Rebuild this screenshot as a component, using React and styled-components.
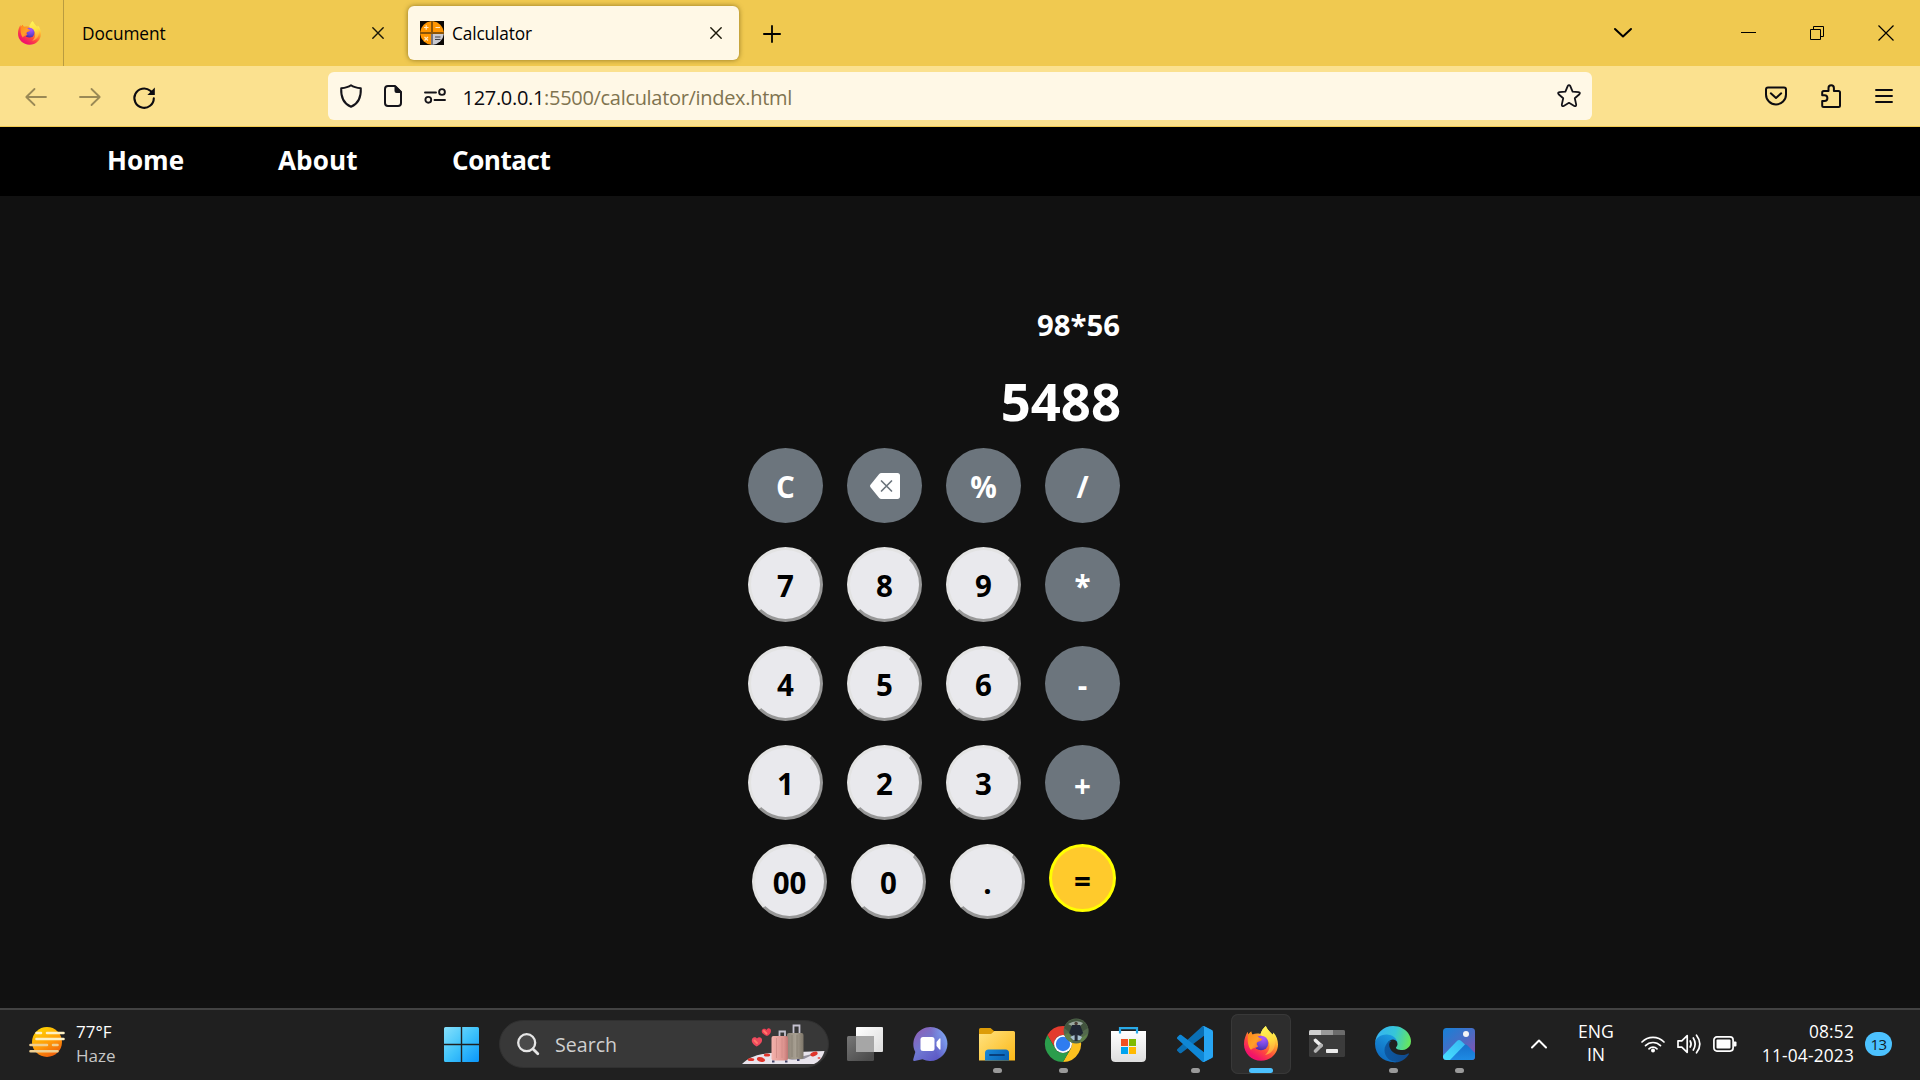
import React from "react";
import styled, { createGlobalStyle } from "styled-components";

const Global = createGlobalStyle`
  * { box-sizing: border-box; }
  body { margin: 0; background: #111; overflow: hidden; }
  body, button { font-family: "Open Sans", "Noto Sans", sans-serif; }
`;

const Screen = styled.div`
  width: 1920px;
  height: 1080px;
  display: flex;
  flex-direction: column;
  background: #111111;
`;

const Svg = styled.svg`
  display: block;
  flex: none;
  overflow: visible;
  margin-left: ${(p) => p.$ml || 0}px;
  margin-top: ${(p) => p.$mt || 0}px;
`;

const Icon = ({ w, h, vb, ml, mt, children, ...rest }) => (
  <Svg width={w} height={h} viewBox={vb || `0 0 ${w} ${h}`} $ml={ml} $mt={mt} fill="none" {...rest}>
    {children}
  </Svg>
);

/* ---------- browser ---------- */

const TabBar = styled.header`
  height: 66px;
  flex: none;
  display: flex;
  align-items: center;
  background: #f0c950;
  color: #15141a;
`;

const ViewButton = styled.div`
  width: 64px;
  height: 66px;
  border-right: 1px solid #b99b40;
  padding: 21px 0 0 18px;
`;

const Tab = styled.div`
  width: ${(p) => (p.$active ? 331 : 336)}px;
  height: 54px;
  margin-left: ${(p) => (p.$active ? 8 : 0)}px;
  padding: 0 ${(p) => (p.$active ? 17.5 : 16.5)}px 1px ${(p) => (p.$active ? 12 : 18)}px;
  display: flex;
  align-items: center;
  gap: 8px;
  border-radius: 6px;
  background: ${(p) => (p.$active ? "#fff8e6" : "transparent")};
  box-shadow: ${(p) => (p.$active ? "0 0 5px rgba(90, 70, 10, 0.65)" : "none")};
`;

const TabTitle = styled.span`
  flex: 1;
  font-size: 17.3px;
  line-height: 26px;
  letter-spacing: ${(p) => p.$ls || 0}px;
  padding-top: 3px;
  color: #000;
`;

const WindowControls = styled.div`
  margin-left: auto;
  display: flex;
  align-items: center;
  padding-right: 26px;
`;

const Toolbar = styled.div`
  height: 61px;
  flex: none;
  display: flex;
  align-items: center;
  background: #fbe18f;
  border-bottom: 1px solid #f0c950;
  padding-left: 25px;
`;

const UrlBar = styled.div`
  width: 1264px;
  height: 48px;
  margin-left: 173px;
  border-radius: 6px;
  background: #fff8e6;
  display: flex;
  align-items: center;
  padding-left: 12px;
`;

const UrlText = styled.span`
  margin-left: 16.5px;
  padding-top: 3px;
  width: 1071px;
  font-size: 20px;
  line-height: 30px;
  letter-spacing: -0.31px;
  color: #7f7450;
  b { font-weight: 400; color: #0c0b10; }
`;

/* ---------- page ---------- */

const Nav = styled.nav`
  height: 69px;
  flex: none;
  display: flex;
  background: #000;
  padding-left: 107px;
`;

const NavLink = styled.a`
  width: ${(p) => p.$w}px;
  padding-top: 14px;
  font-size: 26.1px;
  line-height: 38px;
  font-weight: 700;
  letter-spacing: ${(p) => p.$ls || 0}px;
  color: #fff;
`;

const Page = styled.main`
  flex: 1;
  padding: 109px 0 0 748px;
`;

const Calculator = styled.section`
  width: 372px;
  color: #fff;
  font-weight: 700;
`;

const Expression = styled.div`
  height: 40px;
  text-align: right;
  font-size: 29.3px;
  line-height: 40px;
`;

const Result = styled.div`
  height: 66px;
  margin: 23px -1px 14px 0;
  text-align: right;
  font-size: 52.6px;
  line-height: 66px;
`;

const KeyRow = styled.div`
  display: flex;
  align-items: flex-start;
  gap: 24px;
  height: 75px;
  margin-bottom: 24px;
  padding-left: ${(p) => (p.$indent ? 4 : 0)}px;
`;

const Key = styled.button`
  flex: none;
  width: 75px;
  height: 75px;
  padding: ${(p) => p.$drop || 2}px 0 0;
  display: flex;
  align-items: center;
  justify-content: center;
  border-radius: 50%;
  border: 3px solid;
  border-color: #e3e3e3 #979797 #979797 #e3e3e3;
  background: #e9e9ed;
  color: #000;
  font-size: 29.5px;
  line-height: 40px;
  font-weight: 700;
`;

const OperatorKey = styled(Key)`
  border: 0;
  background: #6c757d;
  color: #fff;
`;

const EqualsKey = styled(Key)`
  width: 67px;
  height: 68px;
  border-color: #ffff00;
  background: #ffca2c;
`;

/* ---------- taskbar ---------- */

const Taskbar = styled.footer`
  height: 72px;
  flex: none;
  display: flex;
  background: #202020;
  border-top: 2px solid #424242;
  color: #fff;
`;

const Weather = styled.div`
  width: 444px;
  display: flex;
  padding: 9px 0 0 29px;
`;

const Stack = styled.div`
  display: flex;
  flex-direction: column;
  align-items: ${(p) => p.$align || "flex-start"};
  padding-top: 1px;
  font-size: ${(p) => p.$size || 17}px;
  line-height: ${(p) => p.$lh || 24}px;
  letter-spacing: ${(p) => p.$ls || 0}px;
  margin-left: ${(p) => p.$ml || 0}px;
  width: ${(p) => (p.$w ? `${p.$w}px` : "auto")};
`;

const Muted = styled.span`
  color: #c6c6c6;
`;

const Search = styled.div`
  width: 330px;
  height: 48px;
  margin: 10px 3px 0 20px;
  display: flex;
  align-items: center;
  border: 1px solid #303030;
  border-radius: 24px;
  background: #383838;
  padding-left: 17px;
`;

const SearchLabel = styled.span`
  width: 187px;
  margin-left: 16px;
  padding-top: 1px;
  font-size: 19.6px;
  line-height: 28px;
  color: #cfcfcf;
`;

const AppSlot = styled.div`
  width: 66px;
  height: 60px;
  margin-top: 4px;
  display: flex;
  flex-direction: column;
  align-items: center;
`;

const AppTile = styled.div`
  width: 60px;
  height: 60px;
  display: flex;
  flex-direction: column;
  align-items: center;
  justify-content: space-between;
  padding: 12px 0 1px;
  border-radius: 7px;
  background: ${(p) => (p.$active ? "#2d2d2d" : "transparent")};
  box-shadow: ${(p) => (p.$active ? "inset 0 0 0 1px #383838" : "none")};
`;

const Indicator = styled.i`
  height: 5px;
  width: ${(p) => (p.$active ? 24 : p.$open ? 9 : 0)}px;
  border-radius: 2.5px;
  background: ${(p) => (p.$active ? "#4cc2ff" : "#9a9a9a")};
`;

const Tray = styled.div`
  margin-left: auto;
  display: flex;
  padding: 9px 28px 0 0;
`;

const Badge = styled.span`
  width: 27px;
  height: 24px;
  margin: 13px 0 0 11px;
  border-radius: 12px;
  background: #4cc2ff;
  color: #10202a;
  font-size: 15px;
  letter-spacing: -0.6px;
  line-height: 24px;
  text-align: center;
`;

const Firefox = ({ w, h, id }) => (
  <Icon w={w} h={h} vb="0 0 34 35">
    <defs>
      <linearGradient id={`${id}b`} x1="28" y1="4" x2="8" y2="33" gradientUnits="userSpaceOnUse">
        <stop offset="0.05" stopColor="#fff44f" />
        <stop offset="0.35" stopColor="#ff9a2c" />
        <stop offset="0.62" stopColor="#ff4a3d" />
        <stop offset="0.9" stopColor="#f2146a" />
      </linearGradient>
      <radialGradient id={`${id}g`} cx="19" cy="12" r="13" gradientUnits="userSpaceOnUse">
        <stop offset="0.1" stopColor="#a755f8" />
        <stop offset="0.6" stopColor="#6b46d8" />
        <stop offset="1" stopColor="#4a2aa0" />
      </radialGradient>
      <linearGradient id={`${id}h`} x1="2" y1="8" x2="18" y2="20" gradientUnits="userSpaceOnUse">
        <stop stopColor="#ff8a16" />
        <stop offset="0.6" stopColor="#ffa02a" />
        <stop offset="1" stopColor="#ff5a36" />
      </linearGradient>
      <linearGradient id={`${id}y`} x1="22" y1="0" x2="30" y2="28" gradientUnits="userSpaceOnUse">
        <stop stopColor="#fff35a" />
        <stop offset="0.5" stopColor="#ffdc3e" />
        <stop offset="1" stopColor="#ff9640" />
      </linearGradient>
    </defs>
    <path
      fill={`url(#${id}b)`}
      d="M21.8 0C23 3.4 26 5.600 28.400 8.600C28.900 7.900 29.200 7.200 29.300 6.400C32.400 9.600 34 14 34 18.500C34 27.600 26.500 34.800 17 34.800C7.600 34.800 0 27.600 0 18.300C0 13 1.600 9.500 3.600 5.800L4.300 8.500C5 7.300 6 6.200 7.200 5.400C7.300 6.500 7.700 7.600 8.300 8.400C11 7.400 14 7.200 16.500 8C17.500 4.700 19.300 2 21.800 0Z"
    />
    <path
      fill={`url(#${id}y)`}
      d="M21.8 0C23 3.400 26 5.600 28.400 8.600C30.800 12 31.800 16 30.600 20.500C29.300 25.500 25 28.600 21 29C25.500 25.500 26.500 20 24.600 15.600C23 12.400 18 12 16.500 8C17.500 4.700 19.300 2 21.800 0Z"
    />
    <circle cx="17" cy="17" r="7.300" fill={`url(#${id}g)`} />
    <path
      fill={`url(#${id}h)`}
      d="M4.300 8.500C5.500 7 6.400 6.200 7.200 5.400C7.300 7 8 8.200 9 9.100C11 8.700 12.800 9.200 13.900 10.400C15 11.800 16.800 12.400 18.200 12.900C17.800 15 15.200 15.200 13.600 16C12 17.400 12.700 19.200 14.200 20.200C12 22.300 8.500 21.500 7 24C4 20.500 3 14 4.300 8.500Z"
    />
  </Icon>
);

const CalcFavicon = () => (
  <Icon w={24} h={24}>
    <rect width="24" height="24" fill="#0b0805" />
    <path d="M11 0.200A12 12 0 0 0 0.200 11H11Z" fill="#ff9500" />
    <path d="M13 0.200A12 12 0 0 1 23.800 11H13Z" fill="#ff9500" />
    <path d="M11 23.800A12 12 0 0 1 0.200 13H11Z" fill="#ff9500" />
    <path d="M13 23.800A12 12 0 0 0 23.800 13H13Z" fill="#c9c9cf" />
    <path d="M12 0V12M0 12H24" stroke="#8b5507" strokeWidth="2" />
    <path d="M12 13V24" stroke="#77747a" strokeWidth="2" />
    <path d="M4 6.500H8.500M6.200 4.300V8.700M15.500 6.500H20M4.500 16L8 19.500M8 16L4.500 19.500" stroke="#ffe7c2" strokeWidth="1.200" />
    <path d="M15 16H20.500M15 18.500H20.500" stroke="#45454a" strokeWidth="1.200" />
  </Icon>
);

const CloseTab = () => (
  <Icon w={12} h={12} stroke="#1a1708" strokeWidth="1.400" strokeLinecap="round">
    <path d="M0.800 0.800L11.200 11.200M11.200 0.800L0.800 11.200" />
  </Icon>
);

const Backspace = () => (
  <Icon w={30} h={26} mt={-2}>
    <path d="M11.500 0H27.500C29 0 30 1 30 2.500V23.500C30 25 29 26 27.500 26H11.500C10.500 26 9.800 25.600 9.200 24.900L0.500 14.200C-0.100 13.500 -0.100 12.500 0.500 11.800L9.200 1.100C9.800 0.400 10.500 0 11.500 0Z" fill="#fff" />
    <path d="M11.500 8L21.500 18M21.500 8L11.500 18" stroke="#6c757d" strokeWidth="1.700" strokeLinecap="round" />
  </Icon>
);

const SunHaze = () => (
  <Icon w={36} h={31} mt={8}>
    <defs>
      <linearGradient id="sun" x1="10" y1="1" x2="25" y2="30" gradientUnits="userSpaceOnUse">
        <stop stopColor="#ffd400" />
        <stop offset="0.55" stopColor="#ff9a0a" />
        <stop offset="1" stopColor="#ee5a0c" />
      </linearGradient>
    </defs>
    <circle cx="18" cy="15" r="15" fill="url(#sun)" />
    <g strokeWidth="2.600" strokeLinecap="round">
      <path d="M7.500 6H12M18 6H34.500M7.500 12H34.500" stroke="#fdf0c4" />
      <path d="M1.500 18H18M24 18H28.500M1.500 24.200H28.500" stroke="#efcf92" />
    </g>
  </Icon>
);

const Luggage = () => (
  <Icon w={84} h={41} mt={1}>
    <defs>
      <linearGradient id="pink" x1="30" y1="0" x2="47" y2="0" gradientUnits="userSpaceOnUse">
        <stop stopColor="#f3b0aa" />
        <stop offset="0.7" stopColor="#dd948f" />
        <stop offset="1" stopColor="#b96f6d" />
      </linearGradient>
      <linearGradient id="grey" x1="45" y1="0" x2="62" y2="0" gradientUnits="userSpaceOnUse">
        <stop stopColor="#8f8679" />
        <stop offset="0.5" stopColor="#a79f92" />
        <stop offset="1" stopColor="#7c7467" />
      </linearGradient>
    </defs>
    <path d="M0 40C6 34 15 30 29 29L82.500 27C81 33 77 38 72 40Z" fill="#e9e4ec" />
    <path d="M46 36L74 29L62 35Z" fill="#94909c" />
    <g fill="#e0342b">
      <ellipse cx="9" cy="35.500" rx="3.300" ry="1.600" />
      <ellipse cx="19" cy="35.500" rx="4.200" ry="2.300" transform="rotate(15 19 35.500)" />
      <ellipse cx="25" cy="31" rx="3.200" ry="1.600" />
      <ellipse cx="72" cy="30" rx="3.800" ry="2" transform="rotate(-20 72 30)" />
      <ellipse cx="77" cy="34" rx="1.500" ry="0.800" />
    </g>
    <path d="M51.500 10V1.500H57.500V10M37.500 12V7.500H43V12" stroke="#c4c1cf" strokeWidth="1.800" />
    <rect x="45" y="9" width="16.500" height="26" rx="2" fill="url(#grey)" />
    <path d="M50 11V33M55 11V33" stroke="#877e71" strokeWidth="0.800" />
    <rect x="29.500" y="12" width="16.500" height="24.500" rx="2" fill="url(#pink)" />
    <path d="M34.500 14V34M40 14V34" stroke="#d48d89" strokeWidth="0.900" />
    <path d="M30 36.500H32.500V38.500H30ZM43 36.500H45.500V38.500H43ZM55 35H57.500V37H55Z" fill="#45466a" />
    <path d="M14.500 22.500C10.500 20 9 17.500 10 15C11.300 12.500 14 13 15 14.500C16.500 12.500 19.500 13 20 15.500C20.500 18.500 17.500 21 14.500 22.500Z" fill="#ef4a5e" />
    <path d="M25 12C21 10.500 19 8.200 20 6C21.300 4 23.600 4.600 24.400 6C25.700 3.500 28.400 3.900 28.900 6.200C29.300 9 27.500 10.800 25 12Z" fill="#ee4055" />
    <path d="M12.500 16.500L15 19M22 7L24.500 9.500" stroke="#ff7a6a" strokeWidth="1.800" strokeLinecap="round" />
  </Icon>
);

const WindowsLogo = () => (
  <Icon w={35} h={35} mt={17}>
    <defs>
      <linearGradient id="win" x1="0" y1="0" x2="35" y2="35" gradientUnits="userSpaceOnUse">
        <stop stopColor="#86e0fb" />
        <stop offset="0.5" stopColor="#3fc3fb" />
        <stop offset="1" stopColor="#0a96fa" />
      </linearGradient>
    </defs>
    <path fill="url(#win)" d="M1.500 0H16.800V16.800H0V1.500Q0 0 1.500 0ZM18.200 0H33.500Q35 0 35 1.500V16.800H18.200ZM0 18.200H16.800V35H1.500Q0 35 0 33.500ZM18.200 18.200H35V33.500Q35 35 33.500 35H18.200Z" />
  </Icon>
);

const TaskView = () => (
  <Icon w={36} h={36}>
    <defs>
      <linearGradient id="tv1" x1="9" y1="1" x2="36" y2="26" gradientUnits="userSpaceOnUse">
        <stop stopColor="#fff" />
        <stop offset="1" stopColor="#dcdcdc" />
      </linearGradient>
      <linearGradient id="tv2" x1="0" y1="10" x2="20" y2="35" gradientUnits="userSpaceOnUse">
        <stop stopColor="#777" />
        <stop offset="1" stopColor="#4c4c4c" />
      </linearGradient>
    </defs>
    <rect y="10" width="27" height="25" rx="1.500" fill="url(#tv2)" />
    <rect x="9" y="1" width="27" height="25" rx="1" fill="url(#tv1)" />
    <path d="M9 10H27V26H9Z" fill="#a6a6a6" />
  </Icon>
);

const Chat = () => (
  <Icon w={36} h={36} ml={-2}>
    <defs>
      <linearGradient id="chat" x1="6" y1="4" x2="30" y2="32" gradientUnits="userSpaceOnUse">
        <stop stopColor="#8a62b8" />
        <stop offset="0.45" stopColor="#6f78d2" />
        <stop offset="1" stopColor="#5a54c4" />
      </linearGradient>
      <linearGradient id="chat2" x1="20" y1="10" x2="36" y2="6" gradientUnits="userSpaceOnUse">
        <stop stopColor="#7da0f0" stopOpacity="0" />
        <stop offset="1" stopColor="#84b0f8" />
      </linearGradient>
    </defs>
    <path fill="url(#chat)" d="M18.500 1A17 17 0 1 1 10.500 33.200L2.500 35Q0.800 35 1.200 33.400L3.300 26A17 17 0 0 1 18.500 1Z" />
    <circle cx="18.500" cy="18" r="17" fill="url(#chat2)" />
    <rect x="8.500" y="11" width="14" height="14" rx="2.500" fill="#fff" />
    <path d="M24.500 16L27.500 12.500Q28.500 12 28.500 13V23Q28.500 24 27.500 23.500L24.500 20Z" fill="#fff" />
  </Icon>
);

const Explorer = () => (
  <Icon w={36} h={36}>
    <defs>
      <linearGradient id="fold" x1="4" y1="5" x2="32" y2="35" gradientUnits="userSpaceOnUse">
        <stop stopColor="#ffe07a" />
        <stop offset="1" stopColor="#fbba1c" />
      </linearGradient>
      <linearGradient id="foldb" x1="8" y1="23" x2="28" y2="35" gradientUnits="userSpaceOnUse">
        <stop stopColor="#1787d8" />
        <stop offset="1" stopColor="#0a62b4" />
      </linearGradient>
    </defs>
    <path d="M1.500 2H11.500L15 5H20V12H0V3.500Q0 2 1.500 2Z" fill="#dd9c08" />
    <path d="M0 8H12L15.500 5H34.500Q36 5 36 6.500V34.500H0Z" fill="url(#fold)" />
    <path d="M6 34.500V27Q6 23.500 9.500 23.500H26.500Q30 23.500 30 27V34.500Z" fill="url(#foldb)" />
    <path d="M11 29H25" stroke="#073f7d" strokeWidth="1.800" strokeLinecap="round" />
  </Icon>
);

const Chrome = () => (
  <Icon w={36} h={36} vb="0 0 48 48">
    <path fill="#e33b2e" d="M24 12H44.800A24 24 0 0 0 3.200 12L13.600 30A12 12 0 0 1 24 12Z" />
    <path fill="#fcc11f" d="M34.400 30L24 48A24 24 0 0 0 44.800 12H24A12 12 0 0 1 34.400 30Z" />
    <path fill="#2b9d4c" d="M13.600 30L3.200 12A24 24 0 0 0 24 48L34.400 30A12 12 0 0 1 13.600 30Z" />
    <circle cx="24" cy="24" r="12" fill="#fff" />
    <circle cx="24" cy="24" r="9.600" fill="#2f7cf0" />
    <g transform="translate(41.500 6.700) scale(1.333)">
      <circle r="12.500" fill="#53694d" />
      <path d="M-12 -3A12.500 12.500 0 0 1 12 -3L7 0L-7 1Z" fill="#42543e" />
      <path d="M-11.500 4C-8 0 -5 3 -6 7L-3 12A12.500 12.500 0 0 1 -11.500 4ZM5 7L11.500 3Q9 10 4 11.500Z" fill="#5f8048" />
      <path d="M-8 -7Q0 -12 7 -8L4 -5H-4Z" fill="#9aa9a0" />
      <path d="M-4 -6L4 -6L7 2L4 5L-4 5L-7 2Z" fill="#1f2634" />
      <path d="M-6 6Q0 2 6 6L4 9H-3Z" fill="#a5bfd0" />
      <path d="M-1.500 3H1.500V10H-1.500Z" fill="#262d3c" />
      <circle cy="-7.500" r="1.700" fill="#4a3a33" />
    </g>
  </Icon>
);

const Store = () => (
  <Icon w={35} h={36} ml={-1}>
    <defs>
      <linearGradient id="bag" x1="0" y1="5" x2="0" y2="36" gradientUnits="userSpaceOnUse">
        <stop stopColor="#fff" />
        <stop offset="1" stopColor="#dedede" />
      </linearGradient>
    </defs>
    <path d="M0 5H35V31.500Q35 36 30.500 36H4.500Q0 36 0 31.500Z" fill="url(#bag)" />
    <path d="M9 7.500V2.200H26V7.500" stroke="#29aae8" strokeWidth="2.200" />
    <path d="M10 13H17V20H10Z" fill="#f25022" />
    <path d="M18 13H25V20H18Z" fill="#7fba00" />
    <path d="M10 21H17V28H10Z" fill="#00a4ef" />
    <path d="M18 21H25V28H18Z" fill="#ffb900" />
  </Icon>
);

const VsCode = () => (
  <Icon w={36} h={36} vb="0 0 100 100">
    <path fill="#0a6fb4" d="M96.461 10.796L75.857 0.876C73.472 -0.273 70.622 0.212 68.750 2.083L1.299 63.583C-0.516 65.237 -0.514 68.094 1.303 69.745L6.813 74.754C8.298 76.104 10.535 76.204 12.134 74.990L93.361 13.370C96.086 11.303 100 13.246 100 16.667V16.427C100 14.027 98.625 11.838 96.461 10.796Z" />
    <path fill="#0f87d6" d="M96.461 89.204L75.857 99.124C73.472 100.273 70.622 99.788 68.750 97.917L1.299 36.417C-0.516 34.763 -0.514 31.906 1.303 30.255L6.813 25.246C8.298 23.896 10.535 23.796 12.134 25.009L93.361 86.630C96.086 88.697 100 86.754 100 83.333V83.573C100 85.974 98.625 88.162 96.461 89.204Z" />
    <path fill="#27a5f3" d="M75.858 99.126C73.472 100.274 70.622 99.788 68.750 97.917C71.056 100.223 75 98.589 75 95.328V4.672C75 1.410 71.056 -0.223 68.750 2.083C70.622 0.211 73.472 -0.274 75.858 0.874L96.459 10.781C98.623 11.822 100 14.011 100 16.413V83.587C100 85.989 98.623 88.179 96.459 89.220L75.858 99.126Z" />
  </Icon>
);

const Terminal = () => (
  <Icon w={36} h={36}>
    <rect y="4" width="36" height="27" rx="1.500" fill="#3b3b3b" />
    <path d="M1.500 4H12V9H0V5.500Q0 4 1.500 4Z" fill="#cfcfcf" />
    <path d="M12 4H24V9H12Z" fill="#9a9a9a" />
    <path d="M24 4H34.500Q36 4 36 5.500V9H24Z" fill="#6c6c6c" />
    <path d="M6.500 14.500L12 19.500" stroke="#efefef" strokeWidth="3.600" strokeLinecap="round" />
    <path d="M12 19.500L6.500 25" stroke="#b5b5b5" strokeWidth="3.600" strokeLinecap="round" />
    <rect x="17" y="23" width="12" height="4" rx="0.800" fill="#ececec" />
  </Icon>
);

const Edge = () => (
  <Icon w={36} h={36} vb="0 0 256 256">
    <defs>
      <linearGradient id="e1" x1="63" y1="178" x2="241" y2="178" gradientUnits="userSpaceOnUse">
        <stop stopColor="#0c59a4" />
        <stop offset="1" stopColor="#114a8b" />
      </linearGradient>
      <linearGradient id="e2" x1="140" y1="70" x2="40" y2="230" gradientUnits="userSpaceOnUse">
        <stop stopColor="#1b9de2" />
        <stop offset="0.5" stopColor="#1581cf" />
        <stop offset="1" stopColor="#0f6cc0" />
      </linearGradient>
      <linearGradient id="e3" x1="20" y1="60" x2="245" y2="120" gradientUnits="userSpaceOnUse">
        <stop stopColor="#35b5f0" />
        <stop offset="0.5" stopColor="#36c6d8" />
        <stop offset="1" stopColor="#66e65e" />
      </linearGradient>
    </defs>
    <path fill="url(#e1)" d="M235.700 195.500a93.700 93.700 0 0 1-10.600 4.700 101.900 101.900 0 0 1-35.900 6.400c-47.300 0-88.500-32.500-88.500-74.300a31.500 31.500 0 0 1 16.400-27.300c-42.800 1.800-53.800 46.400-53.800 72.500 0 74 68.100 81.400 82.800 81.400 7.900 0 19.800-2.300 27-4.600l1.300-.4a128.300 128.300 0 0 0 66.600-52.800 4 4 0 0 0-5.300-5.600z" />
    <path fill="url(#e2)" d="M105.700 241.400a79.200 79.200 0 0 1-22.700-21.300 80.700 80.700 0 0 1 29.500-120c3.200-1.500 8.500-4.100 15.600-4a32.400 32.400 0 0 1 25.700 13 31.900 31.900 0 0 1 6.300 18.700c0-.2 24.500-79.600-80-79.600-43.900 0-80 41.600-80 78.200a130.200 130.200 0 0 0 12.100 56 128 128 0 0 0 156.400 67 75.500 75.500 0 0 1-62.800-8z" />
    <path fill="url(#e3)" d="M152.300 148.900c-.9 1-3.400 2.500-3.400 5.600 0 2.600 1.700 5.200 4.800 7.300 14.300 10 41.400 8.600 41.500 8.600a59.600 59.600 0 0 0 30.300-8.300 61.400 61.400 0 0 0 30.400-52.900c.3-22.400-8-37.300-11.300-43.900C223.500 23.900 177.700 0 128 0A128 128 0 0 0 0 126.200c.5-36.500 36.800-66 80-66 3.500 0 23.500.3 42 10 16.300 8.600 24.900 19 30.800 29.200 6.200 10.700 7.300 24.100 7.300 29.500 0 5.300-2.700 13.300-7.800 20z" />
  </Icon>
);

const Photos = () => (
  <Icon w={32} h={36}>
    <defs>
      <linearGradient id="ph1" x1="4" y1="2" x2="30" y2="32" gradientUnits="userSpaceOnUse">
        <stop stopColor="#1b7fd6" />
        <stop offset="0.5" stopColor="#4a6cc4" />
        <stop offset="1" stopColor="#8b4fae" />
      </linearGradient>
      <linearGradient id="ph2" x1="20" y1="14" x2="4" y2="34" gradientUnits="userSpaceOnUse">
        <stop stopColor="#36b9f2" />
        <stop offset="1" stopColor="#47dcff" />
      </linearGradient>
      <linearGradient id="ph3" x1="22" y1="18" x2="22" y2="34" gradientUnits="userSpaceOnUse">
        <stop stopColor="#1670cc" />
        <stop offset="1" stopColor="#1e8be4" />
      </linearGradient>
      <clipPath id="phc">
        <rect y="2" width="32" height="32" rx="3.500" />
      </clipPath>
    </defs>
    <g clipPath="url(#phc)">
      <rect y="2" width="32" height="32" fill="url(#ph1)" />
      <path d="M4 36L20.500 19.500Q22.500 17.500 24.500 19.500L34 29V36H4Z" fill="url(#ph3)" />
      <path d="M0 29.500L14 15Q16 13 18.200 15L22 18.600L5 36H0Z" fill="url(#ph2)" />
    </g>
    <circle cx="23" cy="8" r="3" fill="#f4f4f6" />
  </Icon>
);

const APPS = [
  { name: "task-view", icon: <TaskView /> },
  { name: "chat", icon: <Chat /> },
  { name: "explorer", icon: <Explorer />, open: true },
  { name: "chrome", icon: <Chrome />, open: true },
  { name: "store", icon: <Store /> },
  { name: "vscode", icon: <VsCode />, open: true },
  { name: "firefox", icon: <Firefox w={34} h={35} id="fx" />, active: true },
  { name: "terminal", icon: <Terminal /> },
  { name: "edge", icon: <Edge />, open: true },
  { name: "photos", icon: <Photos />, open: true },
];

const DIGIT_ROWS = [
  ["7", "8", "9", "*"],
  ["4", "5", "6", "-"],
  ["1", "2", "3", "+"],
];

export default function App() {
  return (
    <Screen>
      <Global />
      <TabBar>
        <ViewButton>
          <Firefox w={23} h={24} id="fv" />
        </ViewButton>
        <Tab>
          <TabTitle $ls={-0.1}>Document</TabTitle>
          <CloseTab />
        </Tab>
        <Tab $active>
          <CalcFavicon />
          <TabTitle $ls={-0.15}>Calculator</TabTitle>
          <CloseTab />
        </Tab>
        <Icon w={18} h={18} ml={23.500} mt={1} stroke="#000" strokeWidth="1.800" strokeLinecap="round">
          <path d="M9 0.900V17.100M0.900 9H17.100" />
        </Icon>
        <WindowControls>
          <Icon w={18} h={10} stroke="#000" strokeWidth="2" strokeLinecap="round" strokeLinejoin="round">
            <path d="M1 1L9 8.500L17 1" />
          </Icon>
          <Icon w={15} h={1} ml={109} mt={-1}>
            <path d="M0 0.500H15" stroke="#000" />
          </Icon>
          <Icon w={14} h={14} ml={54} stroke="#000">
            <path d="M0.500 3.500H10.500V13.500H0.500ZM3.500 3V0.500H13.500V10.500H11" />
          </Icon>
          <Icon w={16} h={16} ml={54} stroke="#000" strokeWidth="1.200">
            <path d="M0.500 0.500L15.500 15.500M15.500 0.500L0.500 15.500" />
          </Icon>
        </WindowControls>
      </TabBar>

      <Toolbar>
        <Icon w={22} h={18} mt={2} stroke="#9a8955" strokeWidth="1.800" strokeLinecap="round" strokeLinejoin="round">
          <path d="M21 9H1.500M9.500 1L1.300 9L9.500 17" />
        </Icon>
        <Icon w={22} h={18} ml={32} mt={2} stroke="#9a8955" strokeWidth="1.800" strokeLinecap="round" strokeLinejoin="round">
          <path d="M1 9H20.500M12.500 1L20.700 9L12.500 17" />
        </Icon>
        <Icon w={22} h={22} ml={32} mt={4}>
          <path d="M20.800 11.200A9.700 9.700 0 1 1 17.300 3.700L19 5.300" stroke="#0c0b10" strokeWidth="2.100" strokeLinecap="round" />
          <path d="M21.800 0.600V8H14.400Z" fill="#0c0b10" />
        </Icon>
        <UrlBar>
          <Icon w={22} h={24}>
            <path d="M11 1.200C13.500 3 17 3.900 20.800 4.300C21.200 13 18.500 19.800 11 22.800C3.500 19.800 0.800 13 1.200 4.300C5 3.900 8.500 3 11 1.200Z" stroke="#15141a" strokeWidth="2" strokeLinejoin="round" />
          </Icon>
          <Icon w={18} h={22} ml={22}>
            <path d="M4 1H11L17 7V18Q17 21 14 21H4Q1 21 1 18V4Q1 1 4 1Z" stroke="#15141a" strokeWidth="2" strokeLinejoin="round" />
            <path d="M10.500 1H12L17.500 6.500V8H12.500Q10.500 8 10.500 6Z" fill="#15141a" />
          </Icon>
          <Icon w={22} h={16} ml={22} stroke="#15141a" strokeWidth="1.900" strokeLinecap="round">
            <path d="M1 4.500H12M10.500 12H21" />
            <circle cx="18" cy="4" r="2.900" />
            <circle cx="4.300" cy="11.800" r="2.900" />
          </Icon>
          <UrlText>
            <b>127.0.0.1</b>:5500/calculator/index.html
          </UrlText>
          <Icon w={24} h={24} ml={23.500}>
            <path d="M10.700 2.100Q12 0.200 13.300 2.100L15.600 7.600L21.600 8.200Q23.700 8.600 22.400 10.200L17.800 14.200L19.200 20.600Q19.300 22.800 17.300 22L12 18.800L6.700 22Q4.700 22.800 4.800 20.600L6.200 14.200L1.600 10.200Q0.300 8.600 2.400 8.200L8.400 7.600Z" stroke="#15141a" strokeWidth="1.800" strokeLinejoin="round" />
          </Icon>
        </UrlBar>
        <Icon w={22} h={20} ml={173} stroke="#0c0b10" strokeWidth="2" strokeLinecap="round" strokeLinejoin="round">
          <path d="M3 1.500H19Q21 1.500 21 3.500V8.500A10 10 0 0 1 1 8.500V3.500Q1 1.500 3 1.500Z" />
          <path d="M5.800 7.300L11 12L16.200 7.300" />
        </Icon>
        <Icon w={21} h={24} ml={34} stroke="#0c0b10" strokeWidth="2" strokeLinejoin="round">
          <path d="M1.200 10.500V8.500Q1.200 7 2.700 7H7.500V4A2.700 2.700 0 0 1 12.900 4V7H17.500Q19 7 19 8.500V21.500Q19 23 17.500 23H2.700Q1.200 23 1.200 21.500V17H3.500A2.900 2.900 0 0 0 3.500 11.200H1.200Z" />
        </Icon>
        <Icon w={18} h={16} ml={33} mt={-1} stroke="#0c0b10" strokeWidth="1.900" strokeLinecap="round">
          <path d="M1 2H17M1 8H17M1 14H17" />
        </Icon>
      </Toolbar>

      <Nav>
        <NavLink $w={171}>Home</NavLink>
        <NavLink $w={174} $ls={0.1}>About</NavLink>
        <NavLink $w={110} $ls={-0.5}>Contact</NavLink>
      </Nav>

      <Page>
        <Calculator>
          <Expression>98*56</Expression>
          <Result>5488</Result>
          <KeyRow>
            <OperatorKey>C</OperatorKey>
            <OperatorKey><Backspace /></OperatorKey>
            <OperatorKey>%</OperatorKey>
            <OperatorKey>/</OperatorKey>
          </KeyRow>
          {DIGIT_ROWS.map(([a, b, c, op]) => (
            <KeyRow key={a}>
              <Key>{a}</Key>
              <Key>{b}</Key>
              <Key>{c}</Key>
              <OperatorKey $drop={op === "+" ? 6 : 2}>{op}</OperatorKey>
            </KeyRow>
          ))}
          <KeyRow $indent>
            <Key>00</Key>
            <Key>0</Key>
            <Key>.</Key>
            <EqualsKey $drop={5}>=</EqualsKey>
          </KeyRow>
        </Calculator>
      </Page>

      <Taskbar>
        <Weather>
          <SunHaze />
          <Stack $ml={11}>
            <span>77°F</span>
            <Muted>Haze</Muted>
          </Stack>
        </Weather>
        <WindowsLogo />
        <Search>
          <Icon w={22} h={22} stroke="#e6e6e6" strokeWidth="2.300" strokeLinecap="round">
            <circle cx="9.700" cy="9.700" r="8.500" fill="#4a4a4a" />
            <path d="M16 16L20.800 20.800" strokeWidth="2.800" />
          </Icon>
          <SearchLabel>Search</SearchLabel>
          <Luggage />
        </Search>
        {APPS.map((app) => (
          <AppSlot key={app.name}>
            <AppTile $active={app.active}>
              {app.icon}
              <Indicator $active={app.active} $open={app.open} />
            </AppTile>
          </AppSlot>
        ))}
        <Tray>
          <Icon w={16} h={10} mt={20} stroke="#fff" strokeWidth="2" strokeLinecap="round" strokeLinejoin="round">
            <path d="M1 8.500L8 1.500L15 8.500" />
          </Icon>
          <Stack $align="center" $size={17.600} $lh={23} $ml={27} $w={44}>
            <span>ENG</span>
            <span>IN</span>
          </Stack>
          <Icon w={24} h={18} ml={23} mt={16} stroke="#fff" strokeWidth="1.700" strokeLinecap="round">
            <path d="M1 7A15.500 15.500 0 0 1 23 7M4.500 10.600A10.600 10.600 0 0 1 19.500 10.600M8 13.800A5.700 5.700 0 0 1 16 13.800" />
            <circle cx="12" cy="15.500" r="2" fill="#fff" stroke="none" />
          </Icon>
          <Icon w={24} h={20} ml={12} mt={15} stroke="#fff" strokeWidth="1.700" strokeLinecap="round" strokeLinejoin="round">
            <path d="M1 6.800H4.800L10.200 1.700V18.300L4.800 13.200H1ZM13.200 7Q15 10 13.200 13M16.300 4Q20 10 16.300 16M19.500 1.200Q26.200 10 19.500 18.800" />
          </Icon>
          <Icon w={24} h={16} ml={12} mt={17}>
            <rect x="0.900" y="0.900" width="19.200" height="14.200" rx="3" stroke="#fff" strokeWidth="1.700" />
            <rect x="3.500" y="3.500" width="14" height="9" rx="1" fill="#fff" />
            <path d="M21 5.500H22.500Q23.500 5.500 23.500 6.500V9.500Q23.500 10.500 22.500 10.500H21Z" fill="#fff" />
          </Icon>
          <Stack $align="flex-end" $size={17.300} $ls={0.200} $ml={15} $w={102}>
            <span>08:52</span>
            <span>11-04-2023</span>
          </Stack>
          <Badge>13</Badge>
        </Tray>
      </Taskbar>
    </Screen>
  );
}
